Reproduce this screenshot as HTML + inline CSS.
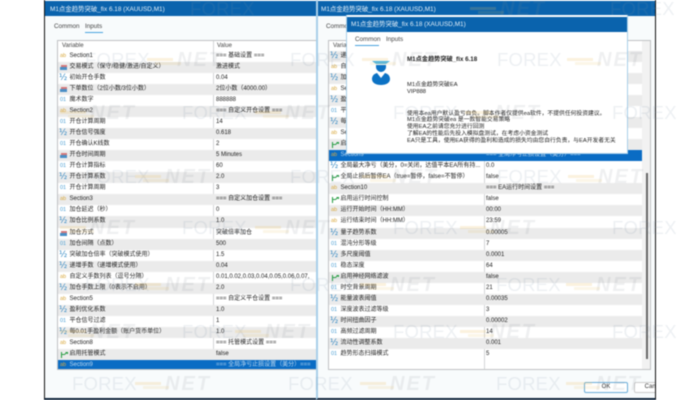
<!DOCTYPE html>
<html><head><meta charset="utf-8"><style>
*{box-sizing:border-box;margin:0;padding:0}
html,body{width:700px;height:400px;background:#fff;overflow:hidden}
body{position:relative;font-family:"Liberation Sans","Noto Sans CJK SC",sans-serif;font-size:6px;color:#222}
#w{position:absolute;left:0;top:0;width:700px;height:400px;filter:blur(.4px)}
.win{position:absolute;top:0;height:400px;background:#f8fbfc;overflow:hidden}
#a{left:44px;width:280px;border-left:1px solid #111;border-bottom:2px solid #10253c}
#b{left:316px;width:340px;border-left:2px solid #a8cfe9;border-right:1px solid #111;border-bottom:2px solid #10253c;border-top:0}
.bar{position:absolute;left:0;right:0;top:1px;height:15px;background:#0a63ad;color:#e2eef8;font-size:6.4px;line-height:18px;padding-left:5px;white-space:nowrap}
.tab{position:absolute;top:23px;font-size:6.3px;color:#444;line-height:8px}
.ul{position:absolute;height:1px;background:#49a3df}
.t{position:absolute;top:40px;background:#fff;border:1px solid #c0c2c4;overflow:hidden}
.h{height:10px;line-height:10px;position:relative;color:#444;padding-left:4px;background:#fff}
.h u{position:absolute;text-decoration:none;top:0}
.col{position:absolute;top:0;bottom:0;width:1px;background:#d4d6d8}
.r{height:11.04px;line-height:11px;position:relative;white-space:nowrap;color:#222}
.g{background:#ebebeb}
.s{background:#0a6cc4;color:#bcd8f0}
.r span{position:absolute;left:11.5px;top:0}
.r em{position:absolute;left:158px;top:0;font-style:normal}
#b .r em{left:157px}
.r i{position:absolute;left:2px;top:0;width:8px;font-style:normal;font-size:5.5px}
.ab{color:#d9a93f}.o{color:#4a9fd4}
.hf{color:#2f86c2;font-size:8.5px!important;font-family:"DejaVu Sans",sans-serif;left:1px!important}
.en:before{content:"";position:absolute;left:1px;top:3px;width:6px;height:2px;background:#d5797a}
.en:after{content:"";position:absolute;left:0;top:5px;width:7px;height:3px;background:#4a8fc6}
.bo svg{position:absolute;left:0;top:2px;width:9px;height:8px}
#d{position:absolute;left:346px;top:15px;width:282px;height:139px;background:#fff;border:1px solid #a8cfe9;border-top:0;overflow:hidden;color:#222}
#d .bar{top:2px;height:15px;background:#0a63ad;padding-left:4px;line-height:15px}
#d p{position:absolute;left:60px;font-size:5.8px;line-height:7px;white-space:nowrap;color:#222}
.btn{position:absolute;top:382px;height:11px;background:#fff;border:1px solid #6badd9;border-radius:2px;text-align:center;line-height:9px;font-size:6px;color:#333}
.f,.n{position:absolute;white-space:nowrap;pointer-events:none}
.f{font-size:18.5px;line-height:18px;color:rgba(130,150,170,.14);letter-spacing:.2px}
.n{font-size:20px;line-height:18px;font-weight:bold;font-style:italic;color:rgba(130,140,150,.13);letter-spacing:2px}
.n:before{content:"";position:absolute;left:-30px;top:7px;width:26px;height:3px;background:rgba(235,190,90,.2);box-shadow:8px 4px 0 rgba(235,190,90,.14)}
</style></head><body><div id="w">

<div class="win" id="a">
<div class="bar">M1点金趋势突破_fix 6.18 (XAUUSD,M1)</div>
<div class="tab" style="left:9px">Common</div>
<div class="tab" style="left:40px">Inputs</div>
<div class="ul" style="left:40px;top:31.5px;width:18px"></div>
<div class="t" style="left:12px;width:262px;height:330px">
<div class="h">Variable<u style="left:159px">Value</u></div>
<div class="col" style="left:155px"></div>
<div class="r"><i class="ab">ab</i><span>Section1</span><em>=== 基础设置 ===</em></div>
<div class="r g"><i class="en"></i><span>交易模式&#xFF08;保守/稳健/激进/自定义&#xFF09;</span><em>激进模式</em></div>
<div class="r"><i class="hf">½</i><span>初始开仓手数</span><em>0.04</em></div>
<div class="r g"><i class="en"></i><span>下单数位&#xFF08;2位小数/3位小数&#xFF09;</span><em>2位小数&#xFF08;4000.00&#xFF09;</em></div>
<div class="r"><i class="o">01</i><span>魔术数字</span><em>888888</em></div>
<div class="r g"><i class="ab">ab</i><span>Section2</span><em>=== 自定义开仓设置 ===</em></div>
<div class="r"><i class="o">01</i><span>开仓计算周期</span><em>14</em></div>
<div class="r g"><i class="hf">½</i><span>开仓信号强度</span><em>0.618</em></div>
<div class="r"><i class="o">01</i><span>开仓确认K线数</span><em>2</em></div>
<div class="r g"><i class="en"></i><span>开仓时间周期</span><em>5 Minutes</em></div>
<div class="r"><i class="o">01</i><span>开仓计算指标</span><em>60</em></div>
<div class="r g"><i class="hf">½</i><span>开仓计算系数</span><em>2.0</em></div>
<div class="r"><i class="o">01</i><span>开仓计算周期</span><em>3</em></div>
<div class="r g"><i class="ab">ab</i><span>Section3</span><em>=== 自定义加仓设置 ===</em></div>
<div class="r"><i class="o">01</i><span>加仓延迟&#xFF08;秒&#xFF09;</span><em>0</em></div>
<div class="r g"><i class="hf">½</i><span>加仓比例系数</span><em>1.0</em></div>
<div class="r"><i class="en"></i><span>加仓方式</span><em>突破倍率加仓</em></div>
<div class="r g"><i class="o">01</i><span>加仓间隔&#xFF08;点数&#xFF09;</span><em>500</em></div>
<div class="r"><i class="hf">½</i><span>突破加仓倍率&#xFF08;突破模式使用&#xFF09;</span><em>1.5</em></div>
<div class="r g"><i class="hf">½</i><span>递增手数&#xFF08;递增模式使用&#xFF09;</span><em>0.04</em></div>
<div class="r"><i class="ab">ab</i><span>自定义手数列表&#xFF08;逗号分隔&#xFF09;</span><em>0.01,0.02,0.03,0.04,0.05,0.06,0.07,</em></div>
<div class="r g"><i class="hf">½</i><span>加仓手数上限&#xFF08;0表示不启用&#xFF09;</span><em>2.0</em></div>
<div class="r"><i class="ab">ab</i><span>Section5</span><em>=== 自定义平仓设置 ===</em></div>
<div class="r g"><i class="hf">½</i><span>盈利优化系数</span><em>1.0</em></div>
<div class="r"><i class="o">01</i><span>平仓信号过滤</span><em>1</em></div>
<div class="r g"><i class="hf">½</i><span>每0.01手盈利金额&#xFF08;账户货币单位&#xFF09;</span><em>1.0</em></div>
<div class="r"><i class="ab">ab</i><span>Section8</span><em>=== 托管模式设置 ===</em></div>
<div class="r g"><i class="bo"><svg viewBox="0 0 9 8"><path d="M1.5 1V7M1.5 3.5H4.5L7 1.5M5.5 1.5H7.5V3" fill="none" stroke="#2fa04a" stroke-width="1.1"/></svg></i><span>启用托管模式</span><em>false</em></div>
<div class="r s"><i class="ab">ab</i><span>Section9</span><em>=== 全局净亏止损设置&#xFF08;美分&#xFF09;===</em></div>
</div>
</div>

<div class="win" id="b">
<div class="bar" style="padding-left:3px">M1点金趋势突破_fix 6.18 (XAUUSD,M1)</div>
<div class="tab" style="left:8px">Common</div>
<div class="t" style="left:10px;width:323px;height:330px">
<div class="h">Variable</div>
<div class="col" style="left:155px"></div>
<div style="position:absolute;left:313px;top:0;bottom:0;width:9px;background:#f2f2f2"></div>
<div style="position:absolute;left:316.5px;top:132px;width:2px;height:186px;background:#666"></div>
<div style="width:313px">
<div class="r g"><i class="hf">½</i><span>递增手数&#xFF08;递增模式使用&#xFF09;</span><em>0.04</em></div>
<div class="r"><i class="ab">ab</i><span>自定义手数列表&#xFF08;逗号分隔&#xFF09;</span><em>0.01</em></div>
<div class="r g"><i class="hf">½</i><span>加仓手数上限&#xFF08;0表示不启用&#xFF09;</span><em>2.0</em></div>
<div class="r"><i class="ab">ab</i><span>Section5</span><em>===</em></div>
<div class="r g"><i class="hf">½</i><span>盈利优化系数</span><em>1.0</em></div>
<div class="r"><i class="o">01</i><span>平仓信号过滤</span><em>1</em></div>
<div class="r g"><i class="hf">½</i><span>每0.01手盈利金额</span><em>1.0</em></div>
<div class="r"><i class="ab">ab</i><span>Section8</span><em>===</em></div>
<div class="r g"><i class="bo"><svg viewBox="0 0 9 8"><path d="M1.5 1V7M1.5 3.5H4.5L7 1.5M5.5 1.5H7.5V3" fill="none" stroke="#2fa04a" stroke-width="1.1"/></svg></i><span>启用托管模式</span><em>false</em></div>
<div class="r s"><i class="ab">ab</i><span>Section9</span><em>=== 全局净亏止损设置&#xFF08;美分&#xFF09;===</em></div>
<div class="r"><i class="hf">½</i><span>全局最大净亏&#xFF08;美分&#xFF0C;0=关闭&#xFF0C;达值平本EA所有持...</span><em>0.0</em></div>
<div class="r"><i class="bo"><svg viewBox="0 0 9 8"><path d="M1.5 1V7M1.5 3.5H4.5L7 1.5M5.5 1.5H7.5V3" fill="none" stroke="#2fa04a" stroke-width="1.1"/></svg></i><span>全局止损后暂停EA&#xFF08;true=暂停&#xFF0C;false=不暂停&#xFF09;</span><em>false</em></div>
<div class="r g"><i class="ab">ab</i><span>Section10</span><em>=== EA运行时间设置 ===</em></div>
<div class="r"><i class="bo"><svg viewBox="0 0 9 8"><path d="M1.5 1V7M1.5 3.5H4.5L7 1.5M5.5 1.5H7.5V3" fill="none" stroke="#2fa04a" stroke-width="1.1"/></svg></i><span>启用运行时间控制</span><em>false</em></div>
<div class="r g"><i class="ab">ab</i><span>运行开始时间&#xFF08;HH:MM&#xFF09;</span><em>00:00</em></div>
<div class="r"><i class="ab">ab</i><span>运行结束时间&#xFF08;HH:MM&#xFF09;</span><em>23:59</em></div>
<div class="r g"><i class="hf">½</i><span>量子趋势系数</span><em>0.00005</em></div>
<div class="r"><i class="o">01</i><span>混沌分形等级</span><em>7</em></div>
<div class="r g"><i class="hf">½</i><span>多尺度阈值</span><em>0.0001</em></div>
<div class="r"><i class="o">01</i><span>稳态深度</span><em>64</em></div>
<div class="r g"><i class="bo"><svg viewBox="0 0 9 8"><path d="M1.5 1V7M1.5 3.5H4.5L7 1.5M5.5 1.5H7.5V3" fill="none" stroke="#2fa04a" stroke-width="1.1"/></svg></i><span>启用神经网络滤波</span><em>false</em></div>
<div class="r"><i class="o">01</i><span>时空背景周期</span><em>21</em></div>
<div class="r g"><i class="hf">½</i><span>能量波表阈值</span><em>0.00035</em></div>
<div class="r"><i class="o">01</i><span>深度波表过滤等级</span><em>3</em></div>
<div class="r g"><i class="hf">½</i><span>时间扭曲因子</span><em>0.00002</em></div>
<div class="r"><i class="o">01</i><span>高频过滤周期</span><em>14</em></div>
<div class="r g"><i class="hf">½</i><span>流动性调整系数</span><em>0.001</em></div>
<div class="r"><i class="o">01</i><span>趋势形态扫描模式</span><em>5</em></div>
</div>
</div>
<div class="btn" style="left:266px;width:44px">OK</div>
<div class="btn" style="left:316px;width:40px;border-color:#ccc">Cancel</div>
</div>

<div id="d">
<div class="bar">M1点金趋势突破_fix 6.18 (XAUUSD,M1)</div>
<div class="tab" style="left:8px;top:21px">Common</div>
<div class="tab" style="left:39px;top:21px">Inputs</div>
<div class="ul" style="left:8px;top:29.5px;width:24px"></div>
<svg style="position:absolute;left:22px;top:45px" width="22" height="26" viewBox="0 0 22 26">
<path d="M3 1H21L17 4H7Z" fill="#4db6e3"/>
<path d="M7 5H17V7C17 10 14 12 12 12C10 12 7 10 7 7Z" fill="#0c72c4"/>
<path d="M8 13L12 18L16 13C20 14 21 17 21 19C21 23 17 25 12 25C7 25 3 23 3 19C3 17 4 14 8 13Z" fill="#0c72c4"/>
</svg>
<p style="top:41px;font-weight:bold;font-size:6.2px">M1点金趋势突破_fix 6.18</p>
<p style="top:67px">M1点金趋势突破EA<br>VIP888</p>
<p style="top:95.5px;line-height:6.9px">使用本ea用户默认盈亏自负。脚本作者仅提供ea软件&#xFF0C;不提供任何投资建议。<br>M1点金趋势突破ea 是一款智能交易策略<br>使用EA之前请您充分进行回测<br>了解EA的性能后先投入模拟盘测试&#xFF0C;在考虑小资金测试<br>EA只是工具&#xFF0C;使用EA获得的盈利和造成的损失均由您自行负责&#xFF0C;与EA开发者无关</p>
</div>

<div class="f" style="left:190px;top:0">FOREX</div><div class="n" style="left:500px;top:0">NET</div><div class="f" style="left:610px;top:0">FOREX</div>
<div class="f" style="left:85px;top:51px">FOREX</div><div class="n" style="left:177px;top:51px">NET</div><div class="f" style="left:290px;top:51px">FOREX</div><div class="n" style="left:392px;top:51px">NET</div><div class="f" style="left:497px;top:51px">FOREX</div><div class="n" style="left:597px;top:51px">NET</div>
<div class="n" style="left:90px;top:104px">NET</div><div class="f" style="left:182px;top:104px">FOREX</div><div class="n" style="left:285px;top:104px">NET</div><div class="f" style="left:393px;top:104px">FOREX</div><div class="n" style="left:495px;top:104px">NET</div><div class="f" style="left:612px;top:104px">FOREX</div>
<div class="f" style="left:85px;top:168px">FOREX</div><div class="n" style="left:165px;top:168px">NET</div><div class="f" style="left:290px;top:168px">FOREX</div><div class="n" style="left:392px;top:168px">NET</div><div class="f" style="left:497px;top:168px">FOREX</div><div class="n" style="left:598px;top:168px">NET</div>
<div class="n" style="left:90px;top:219px">NET</div><div class="f" style="left:182px;top:219px">FOREX</div><div class="n" style="left:285px;top:219px">NET</div><div class="f" style="left:393px;top:219px">FOREX</div><div class="n" style="left:490px;top:219px">NET</div><div class="f" style="left:612px;top:219px">FOREX</div>
<div class="f" style="left:85px;top:276px">FOREX</div><div class="n" style="left:165px;top:276px">NET</div><div class="f" style="left:290px;top:276px">FOREX</div><div class="n" style="left:390px;top:276px">NET</div><div class="f" style="left:496px;top:276px">FOREX</div><div class="n" style="left:596px;top:276px">NET</div>
<div class="n" style="left:90px;top:323px">NET</div><div class="f" style="left:182px;top:323px">FOREX</div><div class="n" style="left:265px;top:323px">NET</div><div class="f" style="left:393px;top:323px">FOREX</div><div class="n" style="left:490px;top:323px">NET</div><div class="f" style="left:612px;top:323px">FOREX</div>
<div class="f" style="left:72px;top:375px">FOREX</div><div class="n" style="left:165px;top:375px">NET</div><div class="f" style="left:288px;top:375px">FOREX</div><div class="n" style="left:390px;top:375px">NET</div><div class="f" style="left:496px;top:375px">FOREX</div><div class="n" style="left:596px;top:375px">NET</div>

</div></body></html>
